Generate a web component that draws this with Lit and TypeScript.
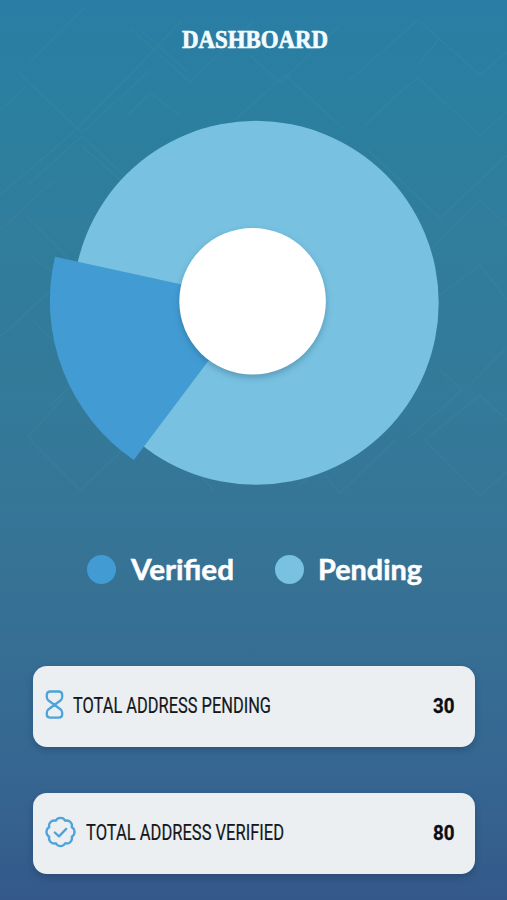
import { LitElement, html, svg, css } from "lit";
import { customElement, property } from "lit/decorators.js";

@customElement("fit-text")
class FitText extends LitElement {
  @property() text = "";
  @property({ type: Number }) width = 100;
  @property({ type: Number }) height = 30;
  @property({ type: Number }) baseline = 20;

  static styles = css`
    :host { display: block; flex: none; }
    svg { display: block; overflow: visible; }
    text { fill: currentColor; stroke: currentColor; stroke-width: var(--weight-boost, 0); }
  `;

  render() {
    return html`<svg width=${this.width} height=${this.height}>
      ${svg`<text x="0" y=${this.baseline} textLength=${this.width} lengthAdjust="spacingAndGlyphs">${this.text}</text>`}
    </svg>`;
  }
}

@customElement("stat-card")
class StatCard extends LitElement {
  @property() kind = "pending";
  @property() label = "";
  @property() value = "";

  static styles = css`
    :host {
      display: flex;
      align-items: center;
      box-sizing: border-box;
      height: 80.5px;
      padding: 0 21px 0 12px;
      border-radius: 14px;
      background: #ebeff2;
      box-shadow: 0 3px 6px rgba(20, 40, 70, 0.3);
      font-family: Roboto, "Liberation Sans", sans-serif;
      color: #0b0d10;
    }
    .icon { display: block; flex: none; fill: none; stroke: #4ea3da; stroke-width: 2.3; stroke-linecap: round; stroke-linejoin: round; margin-bottom: 3px; }
    .label { font-size: 21.5px; margin-right: auto; color: #15171a; --weight-boost: 0.2px; }
    .pending { margin-left: 9px; }
    .verified { margin-left: 10px; }
    .value { font-size: 20.5px; font-weight: 700; --weight-boost: 0.3px; }
  `;

  icon() {
    if (this.kind === "pending") {
      return html`<svg class="icon" width="19" height="30" viewBox="0 0 19 30">
        <path d="M5.5 1.5H13.5Q17.2 1.5 17.2 5V7Q17.2 9 15.8 10.2L3.6 19.2Q1.8 20.7 1.8 22.8V24.5Q1.8 27.7 5.5 27.7H13.5Q17.2 27.7 17.2 24.5V22.8Q17.2 20.7 15.4 19.2L3.2 10.2Q1.8 9 1.8 7V5Q1.8 1.5 5.5 1.5Z" />
      </svg>`;
    }
    return html`<svg class="icon" width="31" height="32" viewBox="0 0 31 32">
      <path d="M26.77 11.33A5.3 5.3 0 0 1 26.77 20.67A5.3 5.3 0 0 1 20.17 27.27A5.3 5.3 0 0 1 10.83 27.27A5.3 5.3 0 0 1 4.23 20.67A5.3 5.3 0 0 1 4.23 11.33A5.3 5.3 0 0 1 10.83 4.73A5.3 5.3 0 0 1 20.17 4.73A5.3 5.3 0 0 1 26.77 11.33Z" />
      <path d="M9.8 16.5L14 20.4L21.2 12.9" />
    </svg>`;
  }

  render() {
    return html`
      ${this.icon()}
      <fit-text class="label ${this.kind}" text=${this.label} width="198" height="30" baseline="22"></fit-text>
      <fit-text class="value" text=${this.value} width="21.5" height="30" baseline="22"></fit-text>
    `;
  }
}

@customElement("app-root")
class AppRoot extends LitElement {
  static styles = css`
    :host {
      display: flex;
      flex-direction: column;
      position: relative;
      width: 507px;
      height: 900px;
      overflow: hidden;
      color: #fff;
      background: linear-gradient(#2a7da5 0, #2b7f9f 100px, #307d9c 220px, #347999 420px, #367395 560px, #366b93 700px, #35628f 820px, #345889 900px);
    }
    .pattern { position: absolute; top: 0; left: 0; fill: none; stroke: #7fc0cc; stroke-width: 1.5; opacity: 0.06; }
    header, .chart, .legend, .cards { position: relative; }
    header { display: flex; justify-content: center; padding: 20px 0 20px 3px; }
    .title { font: 700 24.5px "Liberation Serif", serif; color: #f3fbff; --weight-boost: 0.7px; }
    .chart { display: block; height: 430px; flex: none; }
    .light { fill: #78c1e1; }
    .dark { fill: #429cd3; }
    .hole { fill: #fff; filter: drop-shadow(0 3px 3px rgba(20, 60, 90, 0.3)); }
    .legend { display: flex; align-items: center; height: 40px; margin-top: 39px; padding-left: 87px; font: 700 28px Lato, sans-serif; --weight-boost: 0.5px; }
    .dot { width: 29px; height: 29px; border-radius: 50%; margin-right: 14.5px; flex: none; }
    .dot.verified { background: #429cd3; }
    .dot.pending { background: #78c1e1; margin-left: 41px; }
    .cards { display: flex; flex-direction: column; gap: 46.5px; margin: 77px 32px 0 33px; }
  `;

  render() {
    return html`
      <svg class="pattern" width="507" height="520">
        <path d="M18 72L82 133L150 70M30 62L84 8M82 146L170 225L80 295M28 185L82 136L140 190M0 195L70 135L130 75L182 20M0 110L28 85M25 215L70 260M0 337L62 280L30 255M33 320L62 350M0 230L52 182M28 437L64 397M28 437L80 490L142 432M50 405L72 385M130 28L190 82L255 20M140 30L188 72M250 55L280 83L340 25M235 120L285 75L345 130M180 115L150 93L128 115M365 125L400 92L418 78L480 135L507 112M368 150L440 218L507 155M350 80L418 20L480 75L507 52M418 65L440 38M430 250L480 200L507 225M440 295L480 265L507 300M408 438L462 390L440 370M425 440L480 395L507 420M425 440L480 495L507 472M340 493L395 440M340 493L325 475M300 485L345 445M200 475L214 491M470 385L507 347" />
      </svg>
      <header>
        <fit-text class="title" text="DASHBOARD" width="146" height="40" baseline="28.2"></fit-text>
      </header>
      <svg class="chart" width="507" height="430" viewBox="0 80 507 430">
        <ellipse class="light" cx="255.9" cy="302.8" rx="182.8" ry="182" />
        <path class="dark" d="M254 300.2L55 256.7A193 193 0 0 0 133.8 460Z" />
        <circle class="hole" cx="252.6" cy="301.3" r="73.3" />
      </svg>
      <section class="legend">
        <span class="dot verified"></span>
        <fit-text text="Verified" width="103" height="40" baseline="30.8"></fit-text>
        <span class="dot pending"></span>
        <fit-text text="Pending" width="104" height="40" baseline="30.8"></fit-text>
      </section>
      <section class="cards">
        <stat-card kind="pending" label="TOTAL ADDRESS PENDING" value="30"></stat-card>
        <stat-card kind="verified" label="TOTAL ADDRESS VERIFIED" value="80"></stat-card>
      </section>
    `;
  }
}
